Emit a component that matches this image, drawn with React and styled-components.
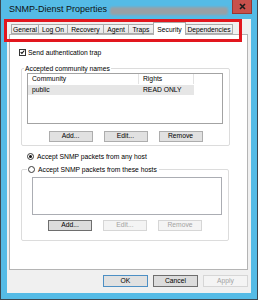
import React from "react";
import styled, { createGlobalStyle } from "styled-components";

const GlobalStyle = createGlobalStyle`
  html, body { margin: 0; padding: 0; background: #fff; }
  body { font-family: "Liberation Sans", Arial, sans-serif; color: #000; }
  * { box-sizing: border-box; }
`;

const Window = styled.div`
  position: relative;
  width: 258px;
  height: 300px;
  background: #55bbe6;
  border: 1px solid #3d4750;
  border-top: none;
  display: flex;
  flex-direction: column;
`;

const TitleBar = styled.div`
  flex: none;
  height: 19px;
  display: flex;
  align-items: flex-start;
`;

const Title = styled.span`
  font-size: 9px;
  line-height: 19px;
  padding-left: 8px;
  white-space: nowrap;
  color: #111;
`;

const Redacted = styled.div`
  margin: 7px 0 0 3px;
  width: 118px;
  height: 8px;
  border-radius: 2px;
  background: #98a0a6;
  filter: blur(1.2px);
`;

const CloseButton = styled.div`
  margin-left: auto;
  margin-right: 5px;
  width: 20px;
  height: 14px;
  background: #c8514c;
  border: 1px solid #9a3632;
  border-top: none;
  display: flex;
  align-items: center;
  justify-content: center;
`;

const Client = styled.div`
  flex: 1;
  margin: 0 6px 6px 6px;
  background: #f0f0f0;
  display: flex;
  flex-direction: column;
`;

const TabStrip = styled.div`
  position: relative;
  z-index: 1;
  height: 15px;
  flex: none;
  display: flex;
  align-items: flex-end;
  padding-left: 4px;
`;

const Tab = styled.div`
  width: ${(p) => p.$w}px;
  height: ${(p) => (p.$active ? 13 : 10)}px;
  margin-right: -1px;
  margin-bottom: ${(p) => (p.$active ? -1 : 0)}px;
  border: 1px solid #acacac;
  border-bottom: ${(p) => (p.$active ? "none" : "1px solid #acacac")};
  background: ${(p) => (p.$active ? "#fff" : "linear-gradient(#f4f4f4, #e7e7e7)")};
  position: relative;
  z-index: ${(p) => (p.$active ? 2 : 1)};
  font-size: 6.75px;
  display: flex;
  align-items: center;
  justify-content: center;
  white-space: nowrap;
`;

const Panel = styled.div`
  height: 236px;
  flex: none;
  margin: 0 3px 0 2px;
  background: #fff;
  border: 1px solid #b4b4b4;
  padding: 12px 0 0 9px;
  display: flex;
  flex-direction: column;
  align-items: flex-start;
`;

const OptionRow = styled.label`
  display: flex;
  align-items: center;
  gap: ${(p) => p.$gap || 2}px;
  height: ${(p) => p.$h || 10}px;
  margin: ${(p) => p.$m || "0"};
  font-size: 6.75px;
  white-space: nowrap;
`;

const CheckBox = styled.span`
  width: 7px;
  height: 7px;
  border: 1px solid #333;
  background: #fff;
  display: flex;
  align-items: center;
  justify-content: center;
`;

const Radio = styled.span`
  width: 7px;
  height: 7px;
  border-radius: 50%;
  border: 1px solid #3a3a3a;
  background: #fff;
  display: flex;
  align-items: center;
  justify-content: center;
  &::after {
    content: "";
    width: 3px;
    height: 3px;
    border-radius: 50%;
    background: ${(p) => (p.$checked ? "#111" : "transparent")};
  }
`;

const Group = styled.fieldset`
  margin: ${(p) => p.$m};
  width: ${(p) => p.$w}px;
  padding: 0;
  min-width: 0;
  border: 1px solid #dcdcdc;
  border-radius: 2px;
  display: flex;
  flex-direction: column;
`;

const Legend = styled.legend`
  font-size: 6.75px;
  line-height: 9px;
  height: 9px;
  padding: 0 ${(p) => p.$pr || 1}px 0 ${(p) => p.$pl || 1}px;
  margin-left: ${(p) => p.$ml}px;
  white-space: nowrap;
  display: flex;
  align-items: center;
  gap: 3px;
`;

const ListView = styled.div`
  margin: ${(p) => p.$m};
  width: ${(p) => p.$w}px;
  height: ${(p) => p.$h}px;
  border: 1px solid ${(p) => p.$border || "#a3a3a3"};
  background: #fff;
  font-size: 6.75px;
`;

const Cols = styled.div`
  display: grid;
  grid-template-columns: 111px 55px 1fr;
  height: 10px;
`;

const HeaderCell = styled.div`
  border-right: 1px solid #e3e3e3;
  padding-left: 4px;
  line-height: 10px;
  white-space: nowrap;
`;

const DataRow = styled.div`
  display: grid;
  grid-template-columns: 111px 55px;
  width: 166px;
  height: 10px;
  margin-top: 1px;
  background: #e6e6e6;
`;

const Cell = styled.div`
  padding-left: ${(p) => p.$pl || 4}px;
  line-height: 10px;
  white-space: nowrap;
`;

const ButtonRow = styled.div`
  display: flex;
  justify-content: ${(p) => p.$justify || "center"};
  gap: ${(p) => p.$gap}px;
  margin-top: ${(p) => p.$mt}px;
  padding: ${(p) => p.$pad || "0"};
`;

const Button = styled.button`
  width: ${(p) => p.$w}px;
  height: ${(p) => p.$h}px;
  padding: 0;
  font-family: inherit;
  font-size: 6.75px;
  line-height: 1;
  color: ${(p) => (p.disabled ? "#a3a3a3" : "#000")};
  background: ${(p) =>
    p.disabled ? "#f4f4f4" : p.$variant === "focus" ? "#dcdcdc" : "#e1e1e1"};
  border: 1px solid
    ${(p) =>
      p.disabled
        ? "#d6d6d6"
        : p.$variant === "default"
        ? "#4d8fc4"
        : p.$variant === "focus"
        ? "#6e6e6e"
        : "#adadad"};
  border-radius: 0;
`;

const Footer = styled.div`
  flex: 1;
  display: flex;
  justify-content: flex-end;
  align-items: flex-start;
  gap: 5px;
  padding: 5px 3px 0 0;
`;

const Annotation = styled.div`
  position: absolute;
  left: 3px;
  top: 19px;
  width: 238px;
  height: 23px;
  border: 3px solid #e2161e;
  pointer-events: none;
  z-index: 5;
`;

const tabs = [
  ["General", 28],
  ["Log On", 30],
  ["Recovery", 37],
  ["Agent", 26],
  ["Traps", 26],
  ["Security", 33, true],
  ["Dependencies", 48],
];

export default function App() {
  return (
    <>
      <GlobalStyle />
      <Window>
        <TitleBar>
          <Title>SNMP-Dienst Properties</Title>
          <Redacted />
          <CloseButton>
            <svg width="7" height="7" viewBox="0 0 7 7">
              <path d="M1 1L6 6M6 1L1 6" stroke="#1c1c1c" strokeWidth="1.6" />
            </svg>
          </CloseButton>
        </TitleBar>
        <Client>
          <TabStrip>
            {tabs.map(([label, w, active]) => (
              <Tab key={label} $w={w} $active={active}>
                {label}
              </Tab>
            ))}
          </TabStrip>
          <Panel>
            <OptionRow>
              <CheckBox>
                <svg width="6" height="6" viewBox="0 0 6 6">
                  <path d="M0.8 3.1L2.3 4.6L5.2 1.2" fill="none" stroke="#111" strokeWidth="1.3" />
                </svg>
              </CheckBox>
              Send authentication trap
            </OptionRow>

            <Group $m="7px 0 0 2px" $w={209}>
              <Legend $ml={2}>Accepted community names</Legend>
              <ListView $m="0 0 0 5px" $w={196} $h={51}>
                <Cols>
                  <HeaderCell>Community</HeaderCell>
                  <HeaderCell>Rights</HeaderCell>
                  <div />
                </Cols>
                <DataRow>
                  <Cell>public</Cell>
                  <Cell>READ ONLY</Cell>
                </DataRow>
              </ListView>
              <ButtonRow $gap={11} $mt={7} $pad="0 0 3px 0">
                <Button $w={44} $h={11}>Add...</Button>
                <Button $w={44} $h={11}>Edit...</Button>
                <Button $w={44} $h={11}>Remove</Button>
              </ButtonRow>
            </Group>

            <OptionRow $gap={3} $m="5px 0 0 8px">
              <Radio $checked />
              Accept SNMP packets from any host
            </OptionRow>

            <Group $m="4px 0 0 2px" $w={208}>
              <Legend $ml={5} $pl={0} $pr={2}>
                <Radio />
                Accept SNMP packets from these hosts
              </Legend>
              <ListView $m="3px 0 0 10px" $w={190} $h={38} $border="#abadb3" />
              <ButtonRow $gap={11} $mt={5} $pad="0 0 9px 0">
                <Button $w={44} $h={11} $variant="focus">Add...</Button>
                <Button $w={44} $h={11} disabled>Edit...</Button>
                <Button $w={44} $h={11} disabled>Remove</Button>
              </ButtonRow>
            </Group>
          </Panel>
          <Footer>
            <Button $w={45} $h={12} $variant="default">OK</Button>
            <Button $w={45} $h={12} $variant="focus">Cancel</Button>
            <Button $w={45} $h={12} disabled>Apply</Button>
          </Footer>
        </Client>
        <Annotation />
      </Window>
    </>
  );
}
